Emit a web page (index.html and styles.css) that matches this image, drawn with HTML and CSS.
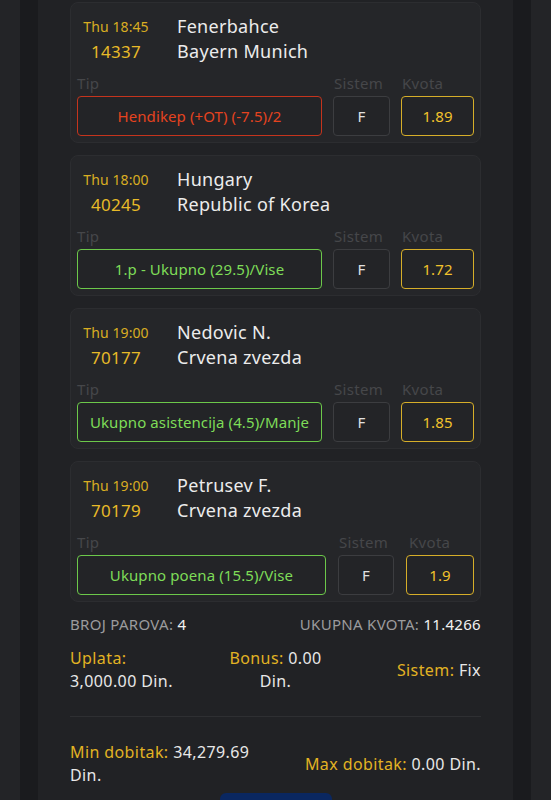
FILE: index.html
```html
<!DOCTYPE html>
<html lang="sr">
<head>
<meta charset="utf-8">
<title>Tiket</title>
<link rel="stylesheet" href="styles.css">
</head>
<body>
<div class="page">
  <div class="edge"></div>
  <div class="shade"></div>
  <main class="panel">
    <section class="card">
      <div class="match">
        <div class="meta"><span class="time">Thu 18:45</span><span class="code">14337</span></div>
        <div class="teams"><span>Fenerbahce</span><span>Bayern Munich</span></div>
      </div>
      <div class="labels"><span>Tip</span><span>Sistem</span><span>Kvota</span></div>
      <div class="boxes">
        <div class="box tip lost">Hendikep (+OT) (-7.5)/2</div>
        <div class="box sys">F</div>
        <div class="box odd">1.89</div>
      </div>
    </section>
    <section class="card">
      <div class="match">
        <div class="meta"><span class="time">Thu 18:00</span><span class="code">40245</span></div>
        <div class="teams"><span>Hungary</span><span>Republic of Korea</span></div>
      </div>
      <div class="labels"><span>Tip</span><span>Sistem</span><span>Kvota</span></div>
      <div class="boxes">
        <div class="box tip won">1.p - Ukupno (29.5)/Vise</div>
        <div class="box sys">F</div>
        <div class="box odd">1.72</div>
      </div>
    </section>
    <section class="card">
      <div class="match">
        <div class="meta"><span class="time">Thu 19:00</span><span class="code">70177</span></div>
        <div class="teams"><span>Nedovic N.</span><span>Crvena zvezda</span></div>
      </div>
      <div class="labels"><span>Tip</span><span>Sistem</span><span>Kvota</span></div>
      <div class="boxes">
        <div class="box tip won">Ukupno asistencija (4.5)/Manje</div>
        <div class="box sys">F</div>
        <div class="box odd">1.85</div>
      </div>
    </section>
    <section class="card wide">
      <div class="match">
        <div class="meta"><span class="time">Thu 19:00</span><span class="code">70179</span></div>
        <div class="teams"><span>Petrusev F.</span><span>Crvena zvezda</span></div>
      </div>
      <div class="labels"><span>Tip</span><span>Sistem</span><span>Kvota</span></div>
      <div class="boxes">
        <div class="box tip won">Ukupno poena (15.5)/Vise</div>
        <div class="box sys">F</div>
        <div class="box odd">1.9</div>
      </div>
    </section>

    <div class="totals">
      <span class="caps">BROJ PAROVA: <b>4</b></span>
      <span class="caps">UKUPNA KVOTA: <b>11.4266</b></span>
    </div>

    <div class="stake">
      <div class="col left"><span class="lbl">Uplata:</span><span class="val block">3,000.00 Din.</span></div>
      <div class="col mid"><span class="lbl">Bonus:</span> <span class="val">0.00</span><span class="val block">Din.</span></div>
      <div class="col right"><span class="lbl">Sistem:</span> <span class="val">Fix</span></div>
    </div>

    <hr class="divider">

    <div class="wins">
      <div class="col left"><span class="lbl">Min dobitak:</span> <span class="val">34,279.69</span><span class="val block">Din.</span></div>
      <div class="col right"><span class="lbl">Max dobitak:</span> <span class="val">0.00 Din.</span></div>
    </div>

    <div class="action"><button class="submit" type="button"></button></div>
  </main>
  <div class="shade"></div>
  <div class="edge"></div>
</div>
</body>
</html>
```

FILE: styles.css
```css
* { box-sizing: border-box; }
html, body { margin: 0; padding: 0; }
body {
  background: #232427;
  font-family: "Noto Sans", "Open Sans", sans-serif;
  letter-spacing: 0.3px;
  color: #e6e6e6;
  height: 800px;
  overflow: hidden;
}
.page {
  display: flex;
  height: 800px;
}
.edge { width: 20px; background: #232427; flex: none; }
.shade { width: 18px; background: #1a1b1e; flex: none; }
.panel {
  flex: 1;
  background: #212225;
  padding: 2px 32px 0;
  display: flex;
  flex-direction: column;
}
.card {
  background: #252629;
  border: 1px solid #2c2d30;
  border-radius: 8px;
  height: 141px;
  flex: none;
  padding: 11px 6px 6px;
  margin-bottom: 12px;
}
.match {
  display: flex;
  align-items: flex-start;
  height: 50px;
}
.meta {
  width: 78px;
  display: flex;
  flex-direction: column;
  align-items: center;
}
.time { color: #d9ad22; font-size: 14px; line-height: 25px; letter-spacing: 0.1px; }
.code { color: #e8ba28; font-size: 17px; line-height: 25px; }
.teams {
  margin-left: 22px;
  display: flex;
  flex-direction: column;
  font-size: 18px;
  line-height: 25px;
  color: #ececec;
}
.labels, .boxes {
  display: grid;
  grid-template-columns: 1fr 57px 73px;
  column-gap: 11px;
}
.labels {
  margin-top: 9px;
  height: 20px;
  line-height: 20px;
  font-size: 15px;
  color: #46474a;
}
.labels span:nth-child(2), .labels span:nth-child(3) { padding-left: 1px; }
.boxes { margin-top: 3px; }
.box {
  height: 40px;
  border: 1px solid #3c3d40;
  border-radius: 4px;
  background: #232427;
  display: flex;
  align-items: center;
  justify-content: center;
  font-size: 15px;
  letter-spacing: 0.1px;
  white-space: nowrap;
}
.tip.lost { border-color: #c5341d; color: #e5431f; }
.tip.won { border-color: #6cc84a; color: #7edc58; }
.sys { color: #e0e0e0; }
.odd { border-color: #d6ae29; color: #f1c22c; }
.wide .boxes { grid-template-columns: 1fr 56px 68px; column-gap: 12px; }
.wide .labels { grid-template-columns: 1fr 56px 68px; column-gap: 12px; }
.wide .labels span:nth-child(3) { padding-left: 3px; }

.totals {
  display: flex;
  justify-content: space-between;
  margin-top: 0;
  font-size: 15px;
  line-height: 20px;
  letter-spacing: 0.3px;
}
.caps { color: #9b9b9d; }
.caps b { color: #f2f2f2; font-weight: 400; }

.stake, .wins {
  display: grid;
  grid-template-columns: 1fr 1fr 1fr;
  font-size: 16px;
  line-height: 23px;
  letter-spacing: 0.4px;
}
.stake { margin-top: 13px; align-items: center; }
.lbl { color: #e2b323; }
.val { color: #e8e8e8; }
.block { display: block; }
.col.mid { text-align: center; }
.col.right { text-align: right; }
.divider {
  border: 0;
  border-top: 1px solid #2e2f32;
  margin: 23px 0 0;
  height: 0;
  flex: none;
}
.wins {
  grid-template-columns: 1fr 1fr;
  margin-top: 24px;
  align-items: center;
}
.action { display: flex; justify-content: center; margin-top: 6px; }
.submit {
  width: 112px;
  height: 40px;
  border: 0;
  border-radius: 6px;
  background: #0a2760;
  padding: 0;
  flex: none;
}
```
